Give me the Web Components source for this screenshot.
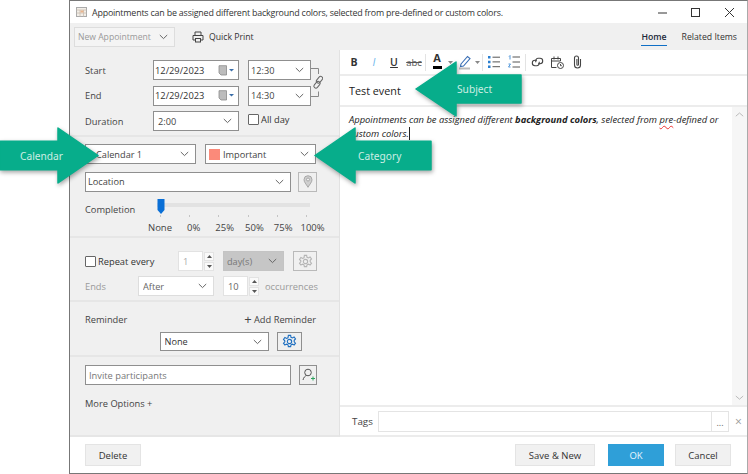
<!DOCTYPE html>
<html><head><meta charset="utf-8"><title>Appointment</title>
<style>
html,body{margin:0;padding:0;background:#fff;}
body{width:748px;height:474px;overflow:hidden;font:9.2px "Open Sans","Noto Sans",sans-serif;color:#333;position:relative;}
</style></head><body>

<x-window>
  <x-titlebar slot="title">Appointments can be assigned different background colors, selected from pre-defined or custom colors.</x-titlebar>
  <x-topbar slot="top"></x-topbar>
  <x-left slot="left"></x-left>
  <x-right slot="right"></x-right>
  <x-footer slot="foot"></x-footer>
</x-window>

<x-callout style="--x:0px;--y:128px;--w:98px;--h:55px" dir="r" text="Calendar" tx="20"></x-callout>
<x-callout style="--x:315px;--y:128px;--w:116px;--h:55px" dir="l" text="Category" tx="43"></x-callout>
<x-callout style="--x:416px;--y:62px;--w:105px;--h:54px" dir="l" text="Subject" tx="41"></x-callout>

<script>
const CHEV='<svg class="chev" width="9" height="6" viewBox="0 0 9 6"><path d="M.8 1l3.700 3.600L8.200 1" fill="none" stroke="#666" stroke-width="1"/></svg>';
const GEAR=(c)=>`<svg width="15" height="15" viewBox="0 0 16 16" fill="none" stroke="${c}" stroke-width="1.200"><path d="M6.800 1.500h2.400l.4 2 1.500.7 1.800-1 1.500 2-1.400 1.500v1.600l1.400 1.500-1.500 2-1.800-1-1.500.7-.4 2H6.800l-.4-2-1.500-.7-1.800 1-1.500-2 1.400-1.500V7.200L1.600 5.700l1.500-2 1.800 1 1.500-.7z"/><circle cx="8" cy="8" r="2.300"/></svg>`;
function def(name,css,html){
  customElements.define(name,class extends HTMLElement{
    constructor(){super();const r=this.attachShadow({mode:'open'});
      r.innerHTML='<style>'+css+'</style>'+(typeof html==='function'?html(this):html);}
  });
}
def('x-select',`
 :host{display:flex;align-items:center;box-sizing:border-box;height:20px;border:1px solid #8f8f8f;background:#fff;padding:0 6px 0 4px;color:#444;font-size:9.200px;min-width:0}
 :host([soft]){border-color:#ddd;color:#555}
 :host([off]){border-color:#c4c4c4;background:#c6c6c6;color:#777}
 :host([ghost]){border-color:#ddd;background:#f4f4f4;color:#999;font-size:8.600px;padding-left:3px}
 .t{flex:1;white-space:nowrap;overflow:hidden;display:flex;align-items:center;gap:3px}
 .chev{flex:none}
`,`<span class="t"><slot></slot></span>${CHEV}`);
def('x-date',`
 :host{display:flex;align-items:center;box-sizing:border-box;height:20px;border:1px solid #8f8f8f;background:#fff;padding:0 3px 0 1px;color:#333;font-size:9.300px}
 span{flex:1}
`,`<span><slot></slot></span><svg width="17" height="11" viewBox="0 0 17 11"><path d="M1 .7h7.500v9.300H3L1 8z" fill="#bcbcbc" stroke="#8a8a8a" stroke-width=".8"/><path d="M11 4h5L13.500 6.500z" fill="#3b6ea8"/></svg>`);
def('x-check',`
 :host{display:inline-flex;align-items:center;gap:2px;color:#333;font-size:9.300px;white-space:nowrap}
 i{display:block;width:9px;height:9px;border:1px solid #666;background:#fff;border-radius:1px}
`,`<i></i><slot></slot>`);
def('x-iconbtn',`
 :host{display:flex;align-items:center;justify-content:center;box-sizing:border-box;height:20px;border:1px solid #8f8f8f;background:#f0f0f0}
 :host([soft]){border-color:#b9b9b9}
`,`<slot></slot>`);
def('x-spin',`
 :host{display:flex;align-items:center;font-size:9.300px;color:#666;flex:none}
 .f{box-sizing:border-box;width:25px;height:20px;background:#fff;border:1px solid #e2e2e2;display:flex;align-items:center;padding-left:4px}
 :host([dim]) .f{color:#aaa}
 .b{width:10px;display:flex;flex-direction:column;gap:1px;margin-left:1px}
 .b b{height:9px;background:#fafafa;border:1px solid #e3e3e3;box-sizing:border-box;display:flex;align-items:center;justify-content:center}
 .b svg{display:block}
`,`<div class="f"><slot></slot></div><div class="b"><b><svg width="5" height="3"><path d="M0 3L2.500 0 5 3z" fill="#555"/></svg></b><b><svg width="5" height="3"><path d="M0 0L2.500 3 5 0z" fill="#555"/></svg></b></div>`);
def('x-btn',`
 :host{display:flex;align-items:center;justify-content:center;box-sizing:border-box;height:22px;width:56px;background:#f1f1f1;border:1px solid #e4e4e4;color:#333;font-size:9.500px;flex:none}
 :host([primary]){background:#2f9fd8;border-color:#2f9fd8;color:#e8f6fd}
`,`<slot></slot>`);
def('x-section',`
 :host{display:block;box-sizing:border-box;padding:0 22px 0 15px;border-bottom:2px solid #e6e6e6}
`,`<slot></slot>`);
def('x-slider',`
 :host{display:block;position:relative;width:173px;height:37px;flex:none}
 .track{position:absolute;left:9px;right:11px;top:6px;height:4px;background:#e2e2e2}
 .thumb{position:absolute;left:9px;top:2px}
 .ticks{position:absolute;left:12px;width:147px;top:18px;display:flex;justify-content:space-between}
 .ticks i{width:1px;height:2px;background:#c4c4c4}
 .labels{position:absolute;left:0;right:0;top:24px;display:flex;font-size:9.500px;color:#444;white-space:nowrap;line-height:14px}
 .labels span:nth-child(2){margin-left:15px}.labels span:nth-child(3){margin-left:15px}
 .labels span:nth-child(4){margin-left:11px}.labels span:nth-child(5){margin-left:10px}.labels span:nth-child(6){margin-left:8px}
`,`<div class="track"></div><div class="ticks"><i></i><i></i><i></i><i></i><i></i><i></i></div>
<svg class="thumb" width="8" height="15" viewBox="0 0 8 15"><path d="M.500 0h7v11L4 15 .500 11z" fill="#0a6fd6"/></svg>
<div class="labels"><span>None</span><span>0%</span><span>25%</span><span>50%</span><span>75%</span><span>100%</span></div>`);

def('x-window',`
 :host{display:grid;position:absolute;left:69px;top:0;width:679px;height:474px;box-sizing:border-box;border:1px solid #777;border-right-color:#aaa;background:#fff;
  grid-template-columns:270px 1fr;grid-template-rows:22px 27px 1fr 36px}
 ::slotted([slot=title]),::slotted([slot=top]),::slotted([slot=foot]){grid-column:1/3}
`,`<slot name="title"></slot><slot name="top"></slot><slot name="left"></slot><slot name="right"></slot><slot name="foot"></slot>`);

def('x-titlebar',`
 :host{display:flex;align-items:center;background:#fff;padding-left:6px;color:#333;font-size:8.900px;letter-spacing:-.19px;white-space:nowrap}
 .ic{margin-right:5px;flex:none}
 .t{flex:1}
 .c{display:flex;align-items:center;flex:none;height:100%;margin-right:1px}
 .c span{width:33.500px;display:flex;justify-content:center}
`,`<svg class="ic" width="11" height="10" viewBox="0 0 11 10"><rect x=".5" y=".5" width="10" height="9" fill="#f2eee8" stroke="#aaa"/><path d="M.5 3h10M4 3v6.500M7.500 3v6.500M.5 6h10" stroke="#c9bdb0" stroke-width=".8"/><rect x="4.500" y="3.500" width="3" height="2" fill="#eab48c"/></svg>
<span class="t"><slot></slot></span>
<div class="c"><span><svg width="11" height="10"><path d="M1 6h9" stroke="#333"/></svg></span><span><svg width="11" height="11"><rect x="1.500" y="1.500" width="8" height="8" fill="none" stroke="#333"/></svg></span><span><svg width="11" height="11"><path d="M1 1l9 9M10 1l-9 9" stroke="#333"/></svg></span></div>`);

def('x-topbar',`
 :host{display:flex;align-items:center;background:#f0f0f0;padding-left:4px;color:#333;font-size:8.700px}
 x-select{width:101px;height:20px}
 .p{display:flex;align-items:center;gap:5px;margin-left:17px}
 .tabs{margin-left:auto;display:flex;gap:15px;padding-right:10px;height:100%;align-items:center}
 .h{color:#1c2a3a;font-weight:600;height:100%;display:flex;align-items:center;box-sizing:border-box;position:relative}
 .h::after{content:"";position:absolute;left:0;right:0;bottom:4px;height:1.500px;background:#0f6fc6}
`,`<x-select ghost>New Appointment</x-select>
<div class="p"><svg width="12" height="12" viewBox="0 0 12 12" fill="none" stroke="#444"><path d="M3 4V1h6v3M3 9H1V4.500h10V9H9"/><rect x="3.500" y="7.500" width="5" height="3.500"/></svg>Quick Print</div>
<div class="tabs"><span class="h">Home</span><span>Related Items</span></div>`);

def('x-left',`
 :host{display:flex;flex-direction:column;background:#f0f0f0;border-right:1px solid #e2e2e2;border-bottom:2px solid #e6e6e6;box-sizing:border-box;min-height:0;color:#444;font-size:9.300px}
 .a{padding-top:10px;height:87px;box-sizing:border-box}
 .g1{display:grid;grid-template-columns:68px 86px 72px 12px;grid-template-rows:20px 20px 20px;row-gap:5.500px;align-items:center}
 .time{margin-left:9px;width:63px;padding-left:2px}
 .chain{grid-column:4;grid-row:1/3;align-self:center}
 .b{padding-top:7px;height:101px;box-sizing:border-box}
 .r{display:flex;gap:9px}
 .r x-select{flex:none;width:111px}
 .r2{display:flex;gap:7px;margin-top:7.500px}
 .r2 x-select{flex:1;padding-left:2px}
 .r2 x-iconbtn{width:19px}
 .comp{display:flex;margin-top:5px;margin-right:-6px}
 .comp span{width:63px;margin-top:6px;line-height:14px;flex:none}
 .c{padding-top:13px;height:64px;box-sizing:border-box}
 .rr{display:flex;align-items:center;height:20px}
 .rr + .rr{margin-top:5px}
 .d{height:55px;box-sizing:border-box;padding-top:8px}
 .d .top{display:flex;justify-content:space-between;height:18px;align-items:center;padding-right:1px}
 .d .low{display:flex;margin-top:4px;margin-left:74.500px;gap:8px}
 .e{padding-top:8px;flex:1}
 .invite{display:flex;gap:8px}
 .in{flex:1;box-sizing:border-box;height:20px;background:#fff;border:1px solid #8f8f8f;display:flex;align-items:center;padding-left:3px;color:#777}
 .more{margin-top:12px;line-height:14px}
 .dim{color:#9a9a9a}
`,`
<x-section class="a"><div class="g1">
 <span>Start</span><x-date>12/29/2023</x-date><x-select class="time">12:30</x-select>
 <svg class="chain" width="12" height="33" viewBox="0 0 12 33" fill="none" stroke="#666"><path d="M0 2.500h7.500v5.500M0 30.500h7.500v-5" stroke="#888"/><rect x="6.500" y="10" width="4" height="7.500" rx="2" transform="rotate(40 8.500 13.750)"/><rect x="4" y="15" width="4" height="7.500" rx="2" transform="rotate(40 6 18.750)"/></svg>
 <span>End</span><x-date>12/29/2023</x-date><x-select class="time">14:30</x-select>
 <span>Duration</span><x-select>2:00</x-select><x-check style="margin-left:9px;margin-top:-4px">All day</x-check>
</div></x-section>
<x-section class="b">
 <div class="r"><x-select style="padding-left:10px">Calendar 1</x-select><x-select style="padding-left:3px"><svg width="11" height="11" style="flex:none"><rect width="11" height="11" fill="#fb8a7a"/></svg>Important</x-select></div>
 <div class="r2"><x-select>Location</x-select><x-iconbtn soft><svg width="10" height="13" viewBox="0 0 10 13" fill="#cfcfcf" stroke="#9a9a9a" stroke-width=".8"><path d="M5 12.300C3 9 1 7 1 4.700a4 4 0 018 0C9 7 7 9 5 12.300z"/><circle cx="5" cy="4.500" r="1.500" fill="#f0f0f0"/></svg></x-iconbtn></div>
 <div class="comp"><span>Completion</span><x-slider></x-slider></div>
</x-section>
<x-section class="c">
 <div class="rr"><x-check style="width:93px;flex:none">Repeat every</x-check><x-spin dim>1</x-spin><x-select off style="width:61px;margin-left:9px;flex:none;padding-left:3px">day(s)</x-select><x-iconbtn soft style="width:24px;margin-left:9px;flex:none">${GEAR('#b5b5b5')}</x-iconbtn></div>
 <div class="rr"><span class="dim" style="width:53px;flex:none">Ends</span><x-select soft style="width:76px;margin-right:9px;color:#666;flex:none">After</x-select><x-spin>10</x-spin><span class="dim" style="margin-left:6px;white-space:nowrap">occurrences</span></div>
</x-section>
<x-section class="d">
 <div class="top"><span>Reminder</span><span><span style="font-size:13px;line-height:10px;vertical-align:-1px">+</span> Add Reminder</span></div>
 <div class="low"><x-select style="width:109px;height:19px;color:#333">None</x-select><x-iconbtn style="width:25px;height:19px">${GEAR('#1f6fc0')}</x-iconbtn></div>
</x-section>
<x-section class="e" style="border-bottom:0">
 <div class="invite"><div class="in">Invite participants</div><x-iconbtn style="width:18px"><svg width="13" height="14" viewBox="0 0 13 14" fill="none" stroke="#555"><circle cx="6" cy="4.500" r="3.300"/><path d="M1 12c.5-2.500 2-4 3.500-4.500"/><path d="M9 10.500h4M11 8.500v4" stroke="#2fa35f"/></svg></x-iconbtn></div>
 <div class="more">More Options +</div>
</x-section>`);

def('x-right',`
 :host{display:flex;flex-direction:column;background:#fff;min-width:0;min-height:0;color:#333}
 .tb{height:24px;flex:none;display:flex;align-items:center;padding-left:4px;border-bottom:2px solid #ececec;font:700 10.500px "Open Sans",sans-serif;color:#333}
 .tb > *{flex:none}
 .t{width:20px;text-align:center;display:flex;justify-content:center;align-items:center}
 .sep{width:1px;height:17px;background:#e3e3e3;margin:0 1px}
 .car{width:7px;display:flex;justify-content:center}
 .subj{height:31px;flex:none;box-sizing:border-box;padding:0 0 0 9px;font-size:10.800px;line-height:30px;color:#222;border-bottom:2px solid #ececec}
 .ed{flex:1;display:flex;min-height:0}
 .txt{flex:1;padding:6px 8px 0 9px;font-style:italic;font-size:9.400px;line-height:13.500px;color:#222}
 .sb{width:15px;background:#f6f6f6;display:flex;flex-direction:column;justify-content:space-between;align-items:center;padding:5px 0}
 .car0{display:inline-block;width:1px;height:13px;background:#222;vertical-align:-3px}
 u{text-decoration:underline wavy #e33;text-decoration-thickness:.7px;text-underline-offset:2px}
 .tags{height:32px;flex:none;box-sizing:border-box;border-top:2px solid #ececec;display:flex;align-items:center;padding-left:12px;font-size:9.800px;color:#444;border-bottom:2px solid #ececec}
 .tags > span:first-child{width:26px}
 .tg{width:351px;height:21px;box-sizing:border-box;border:1px solid #e4e4e4;display:flex;justify-content:flex-end}
 .tg span{width:16px;border-left:1px solid #e4e4e4;text-align:center;line-height:22px;font-size:9px;color:#666}
 .x{margin-left:6px;color:#999;font-size:12px}
`,`
<div class="tb">
 <span class="t">B</span><span class="t" style="font-style:italic;font-weight:400;color:#6bb5ec">I</span><span class="t" style="text-decoration:underline;font-weight:600">U</span><span class="t" style="font-weight:400;text-decoration:line-through;font-size:9.500px;color:#555">abc</span>
 <i class="sep"></i>
 <span class="t" style="display:flex;flex-direction:column;line-height:10px;font-size:11px;height:18px;justify-content:flex-start"><span>A</span><svg width="9" height="3" style="display:block;margin-top:3px"><rect width="9" height="3" fill="#000"/></svg></span>
 <span class="car"><svg width="5" height="3"><path d="M0 0h5L2.500 3z" fill="#888"/></svg></span>
 <span class="t"><svg width="15" height="16" viewBox="0 0 15 16" fill="none"><path d="M4 10L10.500 2.500l2.500 2L6.500 12 3.500 12.500z" stroke="#3a6fb5" stroke-width="1.100"/><path d="M2 14.500h11" stroke="#bbb" stroke-width="2"/></svg></span>
 <span class="car"><svg width="5" height="3"><path d="M0 0h5L2.500 3z" fill="#888"/></svg></span>
 <i class="sep"></i>
 <span class="t"><svg width="12" height="12" viewBox="0 0 12 12"><path d="M0 0h2.500v2.500H0zM0 4.700h2.500v2.500H0zM0 9.400h2.500v2.500H0z" fill="#2a7fd0"/><path d="M4.500 1.200H12M4.500 5.900H12M4.500 10.700H12" stroke="#555"/></svg></span>
 <span class="t"><svg width="12" height="14" viewBox="0 0 12 14"><path d="M1 1.500L2 .5v4M.5 9h2l-2 3h2" fill="none" stroke="#2a7fd0" stroke-width=".8"/><path d="M4.500 2H12M4.500 7H12M4.500 12H12" stroke="#555"/></svg></span>
 <i class="sep"></i>
 <span class="t"><svg width="13" height="10" viewBox="0 0 13 10" fill="none" stroke="#444" stroke-width="1.100"><path d="M6 3.300H4a2.700 2.700 0 000 5.400h2a2.700 2.700 0 002-4"/><path d="M7 6.700h2a2.700 2.700 0 000-5.400H7a2.700 2.700 0 00-2 4"/></svg></span>
 <span class="t"><svg width="13" height="13" viewBox="0 0 13 13" fill="none" stroke="#444"><path d="M5.500 11.500h-5v-9h9V5M.5 5h9M3 .5v3M7 .5v3"/><circle cx="9.500" cy="9.500" r="3"/><path d="M9.500 8v1.700h1.300"/></svg></span>
 <span class="t"><svg width="9" height="14" viewBox="0 0 9 14" fill="none" stroke="#444" stroke-width="1.100"><path d="M7.500 4v6a3 3 0 01-6 0V3a2 2 0 014 0v6.500a.8.8 0 01-1.600 0V4"/></svg></span>
</div>
<div class="subj">Test event</div>
<div class="ed">
 <div class="txt">Appointments can be assigned different <b>background colors</b>, selected from <u>pre</u>-defined or <span>custom colors.</span><i class="car0"></i></div>
 <div class="sb"><svg width="9" height="5"><path d="M.8 4.200L4.500 1l3.700 3.200" fill="none" stroke="#bbb"/></svg><svg width="9" height="5"><path d="M.8 1l3.700 3.200L8.200 1" fill="none" stroke="#bbb"/></svg></div>
</div>
<div class="tags"><span>Tags</span><div class="tg"><span>...</span></div><span class="x">×</span></div>`);

def('x-footer',`
 :host{display:flex;align-items:center;background:#fff;padding:0 16px 0 15px}
 .s{flex:1}
`,`<x-btn>Delete</x-btn><span class="s"></span><x-btn style="width:80px">Save &amp; New</x-btn><x-btn primary style="margin-left:13px">OK</x-btn><x-btn style="margin-left:11px">Cancel</x-btn>`);

def('x-callout',`
 :host{position:absolute;left:var(--x);top:var(--y);width:var(--w);height:var(--h);display:block}
 svg{position:absolute;inset:0;overflow:visible;filter:drop-shadow(1px 2px 2px rgba(0,0,0,.35))}
 span{position:absolute;top:50%;transform:translateY(-50%);color:#cdeee4;font:10.200px "Noto Sans","Open Sans",sans-serif;white-space:nowrap}
`,(el)=>{
  const w=parseFloat(el.style.getPropertyValue('--w')),h=parseFloat(el.style.getPropertyValue('--h'));
  const dir=el.getAttribute('dir'),head=40,mid=h/2,t=h*0.24,b=h*0.76;
  const pts=dir==='l'?`0,${mid} ${head},0 ${head},${t} ${w},${t} ${w},${b} ${head},${b} ${head},${h}`:
    `${w},${mid} ${w-head},0 ${w-head},${t} 0,${t} 0,${b} ${w-head},${b} ${w-head},${h}`;
  return `<svg width="${w}" height="${h}"><polygon points="${pts}" fill="#07ad8b" stroke="#07ad8b" stroke-linejoin="round" stroke-width="1.500"/></svg><span style="left:${el.getAttribute('tx')}px"><slot></slot>${el.getAttribute('text')}</span>`;
});
</script>
</body></html>
